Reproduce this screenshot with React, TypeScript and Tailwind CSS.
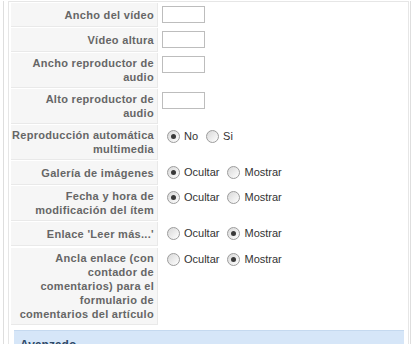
import React from 'react';

const Radio = ({ checked }: { checked?: boolean }) => (
  <span className="ml-[5px] mr-[4px] inline-flex h-[13px] w-[13px] shrink-0 items-center justify-center rounded-full border border-[#9c9c9c] bg-gradient-to-br from-[#d8d8d8] to-white">
    {checked && <span className="h-[5px] w-[5px] rounded-full bg-[#3a3a3a]" />}
  </span>
);

const Choice = ({ options, value }: { options: string[]; value: string }) => (
  <div className="flex h-[17px] items-center">
    {options.map((o) => (
      <label key={o} className="mr-[3px] flex items-center">
        <Radio checked={o === value} />
        <span>{o}</span>
      </label>
    ))}
  </div>
);

const Field = () => (
  <input
    type="text"
    className="block h-[17px] w-[43px] border border-[#bdbdbd] bg-white outline-none"
  />
);

const Row = ({ lines, children, tall }: { lines: string[]; children: React.ReactNode; tall?: boolean }) => (
  <div className={tall ? 'flex pt-[2px]' : 'flex pt-[1px]'}>
    <div className="flex min-h-[24px] w-[147px] shrink-0 flex-col justify-center border-r border-b border-[#e9e9e9] bg-[#f6f6f6] py-[3px] pr-[3px] text-right font-bold leading-[14px] tracking-[0.3px] text-[#666]">
      {lines.map((l) => (
        <div key={l} className="whitespace-nowrap">
          {l}
        </div>
      ))}
    </div>
    <div className="ml-[1px] flex-1 p-[3px]">{children}</div>
  </div>
);

const hide = ['Ocultar', 'Mostrar'];

export default function App() {
  return (
    <div className="h-[344px] w-[413px] overflow-hidden bg-white pt-[1px] font-['Liberation_Sans',Arial,sans-serif] text-[11px] text-[#333]">
      <div className="ml-[3px] mr-[2px] border-x border-[#dedede]">
        <div className="ml-[4px] mr-[1px] border-x border-t border-[#e6e6e6] pl-[2px] pb-[20px]">
          <Row lines={['Ancho del vídeo']}>
            <Field />
          </Row>
          <Row lines={['Vídeo altura']}>
            <Field />
          </Row>
          <Row lines={['Ancho reproductor de', 'audio']}>
            <Field />
          </Row>
          <Row lines={['Alto reproductor de', 'audio']}>
            <Field />
          </Row>
          <Row lines={['Reproducción automática', 'multimedia']}>
            <Choice options={['No', 'Si']} value="No" />
          </Row>
          <Row lines={['Galería de imágenes']}>
            <Choice options={hide} value="Ocultar" />
          </Row>
          <Row lines={['Fecha y hora de', 'modificación del ítem']}>
            <Choice options={hide} value="Ocultar" />
          </Row>
          <Row lines={["Enlace 'Leer más...'"]}>
            <Choice options={hide} value="Mostrar" />
          </Row>
          <Row tall lines={['Ancla enlace (con', 'contador de', 'comentarios) para el', 'formulario de', 'comentarios del artículo']}>
            <Choice options={hide} value="Mostrar" />
          </Row>
          <div className="mt-[5px] mr-[4px] ml-[3px] border-t border-[#c5d9ef] bg-[#d6e6f8] px-[6px] pt-[5px] text-[12px] font-bold text-[#2e4a68]">
            Avanzado
          </div>
        </div>
      </div>
    </div>
  );
}
